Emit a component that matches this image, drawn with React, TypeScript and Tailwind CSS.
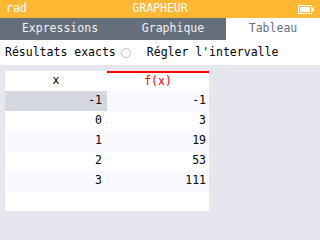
import React from 'react'

const rows = [
  { x: '-1', y: '-1' },
  { x: '0', y: '3' },
  { x: '1', y: '19' },
  { x: '2', y: '53' },
  { x: '3', y: '111' },
]

export default function App() {
  return (
    <div className="w-[320px] h-[240px] overflow-hidden bg-[#e6e6ef] text-[11.5px] leading-none font-['DejaVu_Sans_Mono',monospace]">
      {/* Barre de titre */}
      <div className="h-[18px] bg-[#ffb734] text-white flex items-center relative px-[6px]">
        <span>rad</span>
        <span className="absolute left-0 right-0 text-center">GRAPHEUR</span>
        <svg className="ml-auto" width="16" height="9" viewBox="0 0 16 9">
          <rect x="0.5" y="0.5" width="13" height="8" fill="none" stroke="white" />
          <rect x="2" y="2" width="10" height="5" fill="white" />
          <rect x="14" y="2.5" width="2" height="4" fill="white" />
        </svg>
      </div>

      {/* Onglets */}
      <div className="h-[22px] bg-[#646f7b] flex">
        <div className="w-[120px] flex items-center justify-center text-[#f2f2f2]">Expressions</div>
        <div className="w-[106px] flex items-center justify-center text-[#f2f2f2]">Graphique</div>
        <div className="flex-1 bg-white flex items-center justify-center text-[#646f7b]">Tableau</div>
      </div>

      {/* Options */}
      <div className="h-[25px] bg-white flex items-center px-[5px] text-black">
        <span>Résultats exacts</span>
        <span className="ml-[5px] w-[10px] h-[10px] rounded-full border border-[#bfbfbf]" />
        <span className="ml-[16px]">Régler l'intervalle</span>
      </div>

      {/* Tableau */}
      <div className="mt-[6px] ml-[5px] w-[204px] bg-white">
        <div className="flex h-[20px]">
          <div className="w-[102px] flex items-center justify-center text-black">x</div>
          <div className="w-[102px] flex items-center justify-center text-[#ff0000] border-t-2 border-[#ff0000]">f(x)</div>
        </div>
        {rows.map((r, i) => (
          <div key={r.x} className={`flex h-[20px] ${i % 2 === 0 ? 'bg-[#f7f9ff]' : 'bg-white'}`}>
            <div className={`w-[102px] flex items-center justify-end pr-[5px] text-black ${i === 0 ? 'bg-[#d4d7e0]' : ''}`}>{r.x}</div>
            <div className="w-[102px] flex items-center justify-end pr-[3px] text-black">{r.y}</div>
          </div>
        ))}
        <div className="h-[20px]" />
      </div>
    </div>
  )
}
